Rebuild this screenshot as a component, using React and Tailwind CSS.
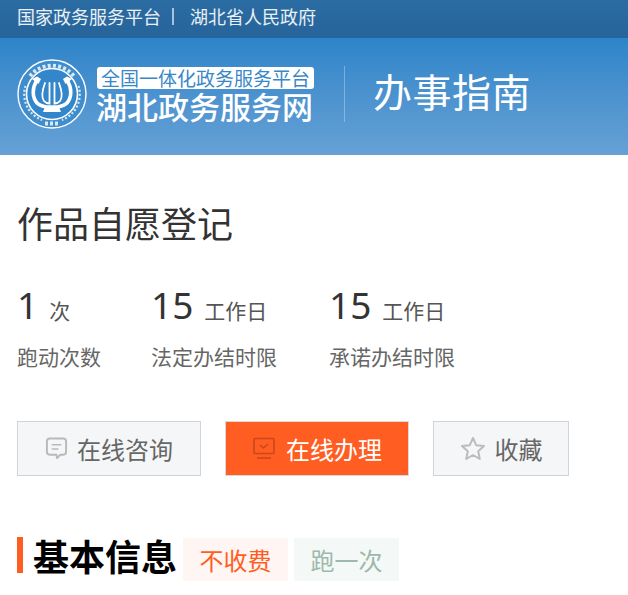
import React from "react";

const font = { fontFamily: '"Noto Sans CJK SC", "Noto Sans", sans-serif' };

function Logo() {
  return (
    <svg width="70" height="70" viewBox="0 0 70 70" className="shrink-0">
      <circle cx="35" cy="35" r="34" fill="#3f8dcd" stroke="#fff" strokeWidth="1.4" />
      <circle cx="35" cy="35" r="25.5" fill="#3286c9" stroke="#fff" strokeWidth="1.6" />
      <g fill="none" stroke="#d8e9f6">
        <path d="M13 17 A 28.5 28.5 0 0 1 57 17" strokeWidth="4" strokeDasharray="3 2.2" />
        <path d="M8.5 27 A 27.5 27.5 0 0 0 25 61" strokeWidth="2.2" strokeDasharray="2 2" />
        <path d="M61.5 27 A 27.5 27.5 0 0 1 45 61" strokeWidth="2.2" strokeDasharray="2 2" />
        <path d="M28 64.5 L42 64.5" strokeWidth="4" strokeDasharray="3 2" />
      </g>
      <g fill="none" stroke="#fff" strokeLinecap="round">
        <path d="M20 21 C15 29 15 38 20 44 C23 47 27 47.5 30 48 L40 48 C43 47.5 47 47 50 44 C55 38 55 29 50 21" strokeWidth="3.6" />
        <path d="M28 24 C25 32 24 38 27 42 C29 44.5 31 44.5 32.5 44.5 L32.5 24" strokeWidth="1.8" />
        <path d="M42 24 C45 32 46 38 43 42 C41 44.5 39 44.5 37.5 44.5 L37.5 24" strokeWidth="1.8" />
      </g>
      <path d="M15 20 L20 17.5 L24 20 L21.5 25 Z M55 20 L50 17.5 L46 20 L48.5 25 Z" fill="#fff" />
      <path d="M28 48 L42 48 L44 53 L26 53 Z" fill="#fff" />
    </svg>
  );
}

function ChatIcon() {
  return (
    <svg width="23" height="25" viewBox="0 0 24 25" fill="none" stroke="#b9b9b9" strokeWidth="2">
      <path d="M5 2 H19 a3 3 0 0 1 3 3 V16 a3 3 0 0 1 -3 3 H16 L12.5 22.5 L12 19 H5 a3 3 0 0 1 -3 -3 V5 a3 3 0 0 1 3 -3 Z" strokeLinejoin="round" />
      <path d="M7 8.5 H17 M7 13 H14" strokeWidth="1.6" />
    </svg>
  );
}

function ScreenIcon() {
  return (
    <svg width="24" height="23" viewBox="0 0 24 23" fill="none" stroke="#c9491a" strokeWidth="1.6">
      <rect x="2" y="1.5" width="20" height="15" rx="1" />
      <path d="M8 8 L11.5 11 L16 7" />
      <path d="M5 21 H19" />
    </svg>
  );
}

function StarIcon() {
  return (
    <svg width="26" height="25" viewBox="0 0 26 25" fill="none" stroke="#bcbcbc" strokeWidth="2" strokeLinejoin="round">
      <path d="M13 2 L16.2 9.2 L24 10 L18.2 15.2 L19.8 23 L13 19 L6.2 23 L7.8 15.2 L2 10 L9.8 9.2 Z" />
    </svg>
  );
}

function Stat({ value, unit, label, className }) {
  return (
    <div className={className}>
      <div className="flex items-baseline h-[38px]">
        <span className="text-[37px] leading-[38px] text-[#333]" style={{ fontFamily: '"Noto Sans", sans-serif' }}>{value}</span>
        <span className="text-[21px] text-[#555] ml-[11px]">{unit}</span>
      </div>
      <div className="text-[21px] leading-[28px] text-[#666] mt-[18px] whitespace-nowrap">{label}</div>
    </div>
  );
}

export default function App() {
  return (
    <div className="w-[628px] h-[595px] overflow-hidden bg-white" style={font}>
      <div className="h-[38px] bg-gradient-to-b from-[#2b6ca3] to-[#26649a] flex items-center pl-[17px] pb-[6px] text-[18px] text-white/90">
        <span>国家政务服务平台</span>
        <span className="w-[2px] h-[17px] bg-white/60 ml-[11px] mr-[16px]" />
        <span>湖北省人民政府</span>
      </div>
      <div className="h-[117px] bg-gradient-to-b from-[#2d84c9] to-[#66a1d5] flex items-center pl-[17px] pb-[6px]">
        <Logo />
        <div className="ml-[9px] w-[218px]">
          <div className="ml-px h-[22px] bg-white rounded-[3px] text-[#3a87c8] text-[19px] leading-[19px] flex items-center justify-center whitespace-nowrap">全国一体化政务服务平台</div>
          <div className="text-white text-[31px] leading-[31px] font-medium whitespace-nowrap mt-[1px]">湖北政务服务网</div>
        </div>
        <div className="w-px h-[56px] bg-white/30 ml-[30px]" />
        <div className="text-white text-[39px] leading-[50px] tracking-[0.5px] ml-[28px] mb-[8px]">办事指南</div>
      </div>
      <div className="pl-[17px]">
        <h1 className="text-[36px] leading-[50px] text-[#333] mt-[42px]">作品自愿登记</h1>
        <div className="flex mt-[39px]">
          <Stat className="w-[134px]" value="1" unit="次" label="跑动次数" />
          <Stat className="w-[178px]" value="15" unit="工作日" label="法定办结时限" />
          <Stat value="15" unit="工作日" label="承诺办结时限" />
        </div>
        <div className="flex mt-[51px]">
          <div className="w-[184px] h-[55px] border-[1px] border-[#d2d3d6] bg-[#f5f6f8] flex items-center justify-center gap-[9px] text-[24px] text-[#666]">
            <ChatIcon />
            <span>在线咨询</span>
          </div>
          <div className="w-[184px] h-[55px] ml-[24px] border-[1px] border-[#d9d9d9] bg-[#ff5d22] flex items-center justify-center gap-[10px] text-[24px] text-white">
            <ScreenIcon />
            <span>在线办理</span>
          </div>
          <div className="w-[136px] h-[55px] ml-[24px] border-[1px] border-[#d2d3d6] bg-[#f5f6f8] flex items-center justify-center gap-[9px] text-[24px] text-[#666]">
            <StarIcon />
            <span>收藏</span>
          </div>
        </div>
        <div className="flex items-start mt-[61px]">
          <div className="w-[6px] h-[36px] bg-[#ff5d22]" />
          <div className="ml-[10px] text-[36px] leading-[36px] font-bold text-black whitespace-nowrap">基本信息</div>
          <div className="ml-[6px] w-[105px] h-[43px] bg-[#fff6f3] text-[#ff5d22] text-[24px] leading-[43px] text-center mt-[1px]">不收费</div>
          <div className="ml-[6px] w-[105px] h-[43px] bg-[#f4f8f6] text-[#9db8ac] text-[24px] leading-[43px] text-center mt-[1px]">跑一次</div>
        </div>
      </div>
    </div>
  );
}
